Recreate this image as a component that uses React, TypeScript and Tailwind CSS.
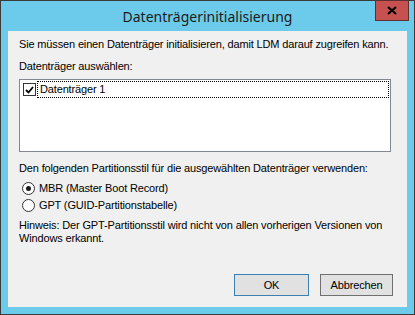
import { useState } from "react";

const font = { fontFamily: '"Liberation Sans", Arial, sans-serif' };

function Radio({ checked }: { checked: boolean }) {
  return (
    <span className="flex h-[13px] w-[13px] items-center justify-center rounded-full border border-[#333333] bg-white">
      {checked && <span className="h-[5px] w-[5px] rounded-full bg-[#1a1a1a]" />}
    </span>
  );
}

export default function App() {
  const [style, setStyle] = useState<"mbr" | "gpt">("mbr");
  const [checked, setChecked] = useState(true);

  return (
    <div
      className="flex h-[315px] w-[415px] flex-col border border-[#3b3b3b] bg-[#6ccbea] text-[11px] tracking-[-0.15px] text-black"
      style={font}
    >
      {/* title bar */}
      <div className="relative flex h-[30px] shrink-0 items-center justify-center">
        <span className="text-[14px] tracking-normal text-[#1b1b1b]" style={{ fontFamily: '"Noto Sans", sans-serif' }}>
          Datenträgerinitialisierung
        </span>
        <button className="absolute right-[5px] top-[-1px] flex h-[21px] w-[34px] items-center justify-center border border-[#5a3030] bg-[#c75050]">
          <svg width="10" height="9" viewBox="0 0 10 9">
            <path d="M1 1 L9 8 M9 1 L1 8" stroke="#000" strokeWidth="2.2" />
          </svg>
        </button>
      </div>

      {/* client area */}
      <div className="mx-[7px] mb-[7px] flex flex-1 flex-col whitespace-nowrap bg-[#f0f0f0] px-[11px] pt-[7px]">
        <div className="leading-[13px]">Sie müssen einen Datenträger initialisieren, damit LDM darauf zugreifen kann.</div>
        <div className="mt-[9px] leading-[13px]">Datenträger auswählen:</div>

        <div className="mt-[6px] h-[73px] w-[372px] border border-[#828790] bg-white p-[1px]">
          <div className="flex h-[17px] items-center">
            <span
              className="ml-[2px] flex h-[13px] w-[13px] shrink-0 items-center justify-center border border-[#333333] bg-white"
              onClick={() => setChecked(!checked)}
            >
              {checked && (
                <svg width="9" height="8" viewBox="0 0 9 8">
                  <path d="M1 4 L3.5 6.5 L8 1" fill="none" stroke="#000" strokeWidth="1.8" />
                </svg>
              )}
            </span>
            <span className="ml-[1px] flex h-[17px] flex-1 items-center border border-dotted border-black pl-[2px]">
              Datenträger 1
            </span>
          </div>
        </div>

        <div className="mt-[10px] leading-[13px]">Den folgenden Partitionsstil für die ausgewählten Datenträger verwenden:</div>

        <label className="mt-[7px] flex h-[13px] items-center gap-[4px] pl-[3px]" onClick={() => setStyle("mbr")}>
          <Radio checked={style === "mbr"} />
          <span>MBR (Master Boot Record)</span>
        </label>
        <label className="mt-[4px] flex h-[13px] items-center gap-[4px] pl-[3px]" onClick={() => setStyle("gpt")}>
          <Radio checked={style === "gpt"} />
          <span>GPT (GUID-Partitionstabelle)</span>
        </label>

        <div className="mt-[7px] leading-[13px]">
          Hinweis: Der GPT-Partitionsstil wird nicht von allen vorherigen Versionen von
          <br />
          Windows erkannt.
        </div>

        <div className="mt-auto mb-[11px] flex justify-end gap-[11px] pr-[3px]">
          <button className="h-[22px] w-[75px] border border-[#3c7fb1] bg-[#e1e1e1]">OK</button>
          <button className="h-[22px] w-[73px] border border-[#707070] bg-[#e1e1e1]">Abbrechen</button>
        </div>
      </div>
    </div>
  );
}
